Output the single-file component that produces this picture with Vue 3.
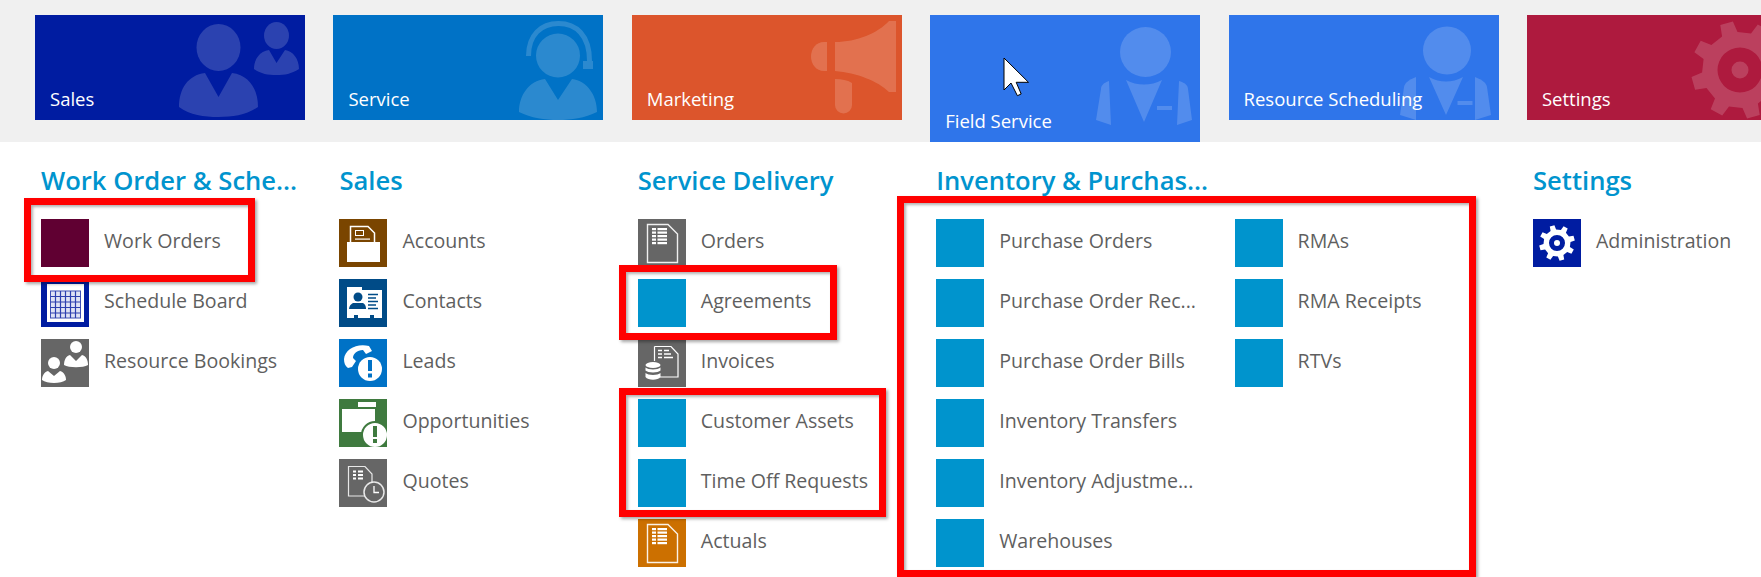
<script setup>
function gear(cx, cy, R, r, n, rot) {
  const pts = []
  const step = (Math.PI * 2) / n
  for (let i = 0; i < n; i++) {
    const a = rot + i * step
    const w = step * 0.17
    const w2 = step * 0.27
    pts.push([cx + r * Math.cos(a - w2), cy + r * Math.sin(a - w2)])
    pts.push([cx + R * Math.cos(a - w), cy + R * Math.sin(a - w)])
    pts.push([cx + R * Math.cos(a + w), cy + R * Math.sin(a + w)])
    pts.push([cx + r * Math.cos(a + w2), cy + r * Math.sin(a + w2)])
  }
  return 'M' + pts.map(p => p[0].toFixed(1) + ' ' + p[1].toFixed(1)).join('L') + 'Z'
}
function ring(cx, cy, r) {
  return `M${cx - r} ${cy}a${r} ${r} 0 1 0 ${2 * r} 0a${r} ${r} 0 1 0 ${-2 * r} 0Z`
}
const tileGear = gear(213, 55, 49, 38, 8, -1.85) + ring(213, 55, 22.5) + ring(213, 55, 8.5)
const smallGear = gear(24, 24, 18, 13.5, 8, -1.85) + ring(24, 24, 8)

const tiles = [
  { key: 'sales', label: 'Sales' },
  { key: 'service', label: 'Service' },
  { key: 'marketing', label: 'Marketing' },
  { key: 'field', label: 'Field Service' },
  { key: 'resource', label: 'Resource Scheduling' },
  { key: 'settings', label: 'Settings' },
]

const blue = null
const columns = [
  {
    title: 'Work Order & Sche...',
    items: [
      { label: 'Work Orders', icon: 'maroon' },
      { label: 'Schedule Board', icon: 'board' },
      { label: 'Resource Bookings', icon: 'bookings' },
    ],
  },
  {
    title: 'Sales',
    items: [
      { label: 'Accounts', icon: 'accounts' },
      { label: 'Contacts', icon: 'contacts' },
      { label: 'Leads', icon: 'leads' },
      { label: 'Opportunities', icon: 'opportunities' },
      { label: 'Quotes', icon: 'quotes' },
    ],
  },
  {
    title: 'Service Delivery',
    items: [
      { label: 'Orders', icon: 'orders' },
      { label: 'Agreements', icon: blue },
      { label: 'Invoices', icon: 'invoices' },
      { label: 'Customer Assets', icon: blue },
      { label: 'Time Off Requests', icon: blue },
      { label: 'Actuals', icon: 'actuals' },
    ],
  },
  {
    title: 'Inventory & Purchas...',
    wide: true,
    items: [
      { label: 'Purchase Orders', icon: blue },
      { label: 'Purchase Order Rec...', icon: blue },
      { label: 'Purchase Order Bills', icon: blue },
      { label: 'Inventory Transfers', icon: blue },
      { label: 'Inventory Adjustme...', icon: blue },
      { label: 'Warehouses', icon: blue },
      { label: 'RMAs', icon: blue },
      { label: 'RMA Receipts', icon: blue },
      { label: 'RTVs', icon: blue },
    ],
  },
  {
    title: 'Settings',
    items: [{ label: 'Administration', icon: 'admin' }],
  },
]
const boxes = ['box-work', 'box-agree', 'box-assets', 'box-inventory']
const docRows = [0, 1, 2, 3, 4]
</script>

<template>
  <div class="page">
    <header class="topbar">
      <div v-for="t in tiles" :key="t.key" class="tile" :class="'tile-' + t.key">
        <svg class="tile-art" width="270" :height="t.key === 'field' ? 127 : 105" fill="#fff" fill-opacity=".17">
          <g v-if="t.key === 'sales'">
            <ellipse cx="183.5" cy="32.5" rx="22" ry="23.5" />
            <path d="M170 58L183.5 82L197 58C214 60 223 74 223 92C212 100 198 102 183.5 102C169 102 155 100 144 92C144 74 153 60 170 58Z" />
            <ellipse cx="241.5" cy="20.5" rx="12.5" ry="13.5" />
            <path d="M234 35L241.5 48L250 35C258 36 264 44 264 54C256 59 250 60 241.5 60C233 60 226 59 219 54C219 44 225 36 234 35Z" />
          </g>
          <g v-else-if="t.key === 'service'">
            <ellipse cx="225" cy="40.5" rx="22" ry="22" />
            <path d="M212 64L225 85L239 64C254 66 264 80 264 97C252 103 238 105 225 105C212 105 198 103 186 97C186 80 196 66 212 64Z" />
            <path d="M195.500 41C195.500 20 208 8.500 225.500 8.500C243 8.500 256.500 20 256.500 46" fill="none" stroke="#fff" stroke-opacity=".17" stroke-width="5" />
            <rect x="250" y="46" width="10" height="8" />
          </g>
          <g v-else-if="t.key === 'marketing'">
            <path d="M203 27C225 27 246 18 257 6H264V77H257C246 66 225 58 203 56Z" />
            <path d="M195 27H192C184 27 179 34 179 41.500C179 49 184 56 192 56H195Z" />
            <path d="M203 64C210 64 215 65 220 68V90A8.500 8.500 0 0 1 203 90Z" />
          </g>
          <g v-else-if="t.key === 'field'">
            <ellipse cx="215.500" cy="37" rx="25.500" ry="25" />
            <path d="M196 65C207 71 221 71 232 65L214 107Z" />
            <rect x="227" y="91" width="15" height="4" />
            <path d="M179 66C173 68 171 71 171 74L166 105L181 110Z" />
            <path d="M249 66C256 68 258 71 258 74L262 105L247 110Z" />
          </g>
          <g v-else-if="t.key === 'resource'">
            <circle cx="218" cy="35.500" r="24" />
            <path d="M200 62C211 68 223 68 234 62L217 100Z" />
            <rect x="228.500" y="86" width="15" height="4" />
            <path d="M187 62C179 65 176 68 175 72L171 100L187 105Z" />
            <path d="M246 62C254 65 257 68 258 72L262 100L246 105Z" />
          </g>
          <path v-else-if="t.key === 'settings'" :d="tileGear" fill-rule="evenodd" />
        </svg>
        <span class="tile-label">{{ t.label }}</span>
      </div>
    </header>

    <main class="menu">
      <section v-for="c in columns" :key="c.title" class="col" :class="{ 'col-wide': c.wide }">
        <h2 class="col-title">{{ c.title }}</h2>
        <ul class="items">
          <li v-for="i in c.items" :key="i.label" class="item">
            <span class="icon" :class="i.icon ? 'ic-' + i.icon : 'ic-blue'">
              <svg v-if="i.icon && i.icon !== 'maroon'" width="48" height="48" viewBox="0 0 48 48">
                <g v-if="i.icon === 'board'">
                  <rect x="6" y="5" width="37" height="38" fill="#fff" />
                  <rect x="9.500" y="12" width="30" height="27" fill="#dfe3f4" stroke="#3f50b5" />
                  <path d="M9.500 17.500H39.500M9.500 23H39.500M9.500 28.500H39.500M9.500 34H39.500M14.500 12V39M19.500 12V39M24.500 12V39M29.500 12V39M34.500 12V39" stroke="#2c3fae" stroke-width="1.200" fill="none" />
                </g>
                <g v-else-if="i.icon === 'bookings'" fill="#fff">
                  <circle cx="35" cy="8" r="6" />
                  <path d="M29 16L35 22L41 16C45 17 47 21 47 26C42 29 28 29 23 26C23 21 25 17 29 16Z" />
                  <circle cx="13" cy="24" r="6" />
                  <path d="M7 32L13 37L19 32C23 33 25 37 25 41C20 45 6 45 1 41C1 37 3 33 7 32Z" />
                </g>
                <g v-else-if="i.icon === 'accounts'">
                  <path d="M11.500 23V7.500H29L35.500 14V23" fill="none" stroke="#fff" stroke-width="1.500" />
                  <rect x="16.500" y="11.500" width="8" height="5" fill="none" stroke="#fff" />
                  <rect x="16" y="19.500" width="15" height="1.200" fill="#fff" />
                  <rect x="8" y="23" width="33" height="20" fill="#fff" />
                </g>
                <g v-else-if="i.icon === 'contacts'">
                  <path d="M8 8H23V11H43V39H35V36H31V39H19V36H15V39H8Z" fill="#fff" />
                  <circle cx="19" cy="18" r="4.500" fill="#004b87" />
                  <path d="M14 24H24C26 25 27 27 27 30H10C10 27 12 25 14 24Z" fill="#004b87" />
                  <path d="M29 15.500H39M29 19H37M29 22.500H39M29 26H37M29 29.500H39" stroke="#004b87" stroke-width="1.500" />
                </g>
                <g v-else-if="i.icon === 'leads'">
                  <path d="M5 20C6 10 18 4 30 7L33 12L27 15L24 11C18 11 14 15 14 19L17 22L13 28L9 29C6 27 5 24 5 20Z" fill="#fff" />
                  <circle cx="31" cy="30" r="12" fill="#fff" />
                  <rect x="29" y="21" width="4" height="11" fill="#0072c6" />
                  <rect x="29" y="34.500" width="4" height="4" fill="#0072c6" />
                </g>
                <g v-else-if="i.icon === 'opportunities'">
                  <rect x="19" y="3" width="18" height="5" fill="#fff" />
                  <rect x="3" y="10" width="33" height="23" fill="#fff" />
                  <circle cx="36" cy="36" r="13" fill="#fff" stroke="#3f7a3f" stroke-width="2" />
                  <rect x="34" y="27" width="4" height="11" fill="#3f7a3f" />
                  <rect x="34" y="40" width="4" height="4" fill="#3f7a3f" />
                </g>
                <g v-else-if="i.icon === 'quotes'">
                  <path d="M9.500 7.500H26L33 15V37H9.500Z" fill="none" stroke="#fff" stroke-width="1.200" stroke-opacity=".85" />
                  <path d="M14 12.500H17M19 12.500H24M14 16H17M19 16H24M14 19.500H17M19 19.500H24" stroke="#fff" stroke-width="2" />
                  <circle cx="35" cy="33" r="10" fill="#666" stroke="#fff" stroke-opacity=".85" stroke-width="1.500" />
                  <path d="M35 27V33.500H40" fill="none" stroke="#fff" stroke-width="1.300" />
                </g>
                <g v-else-if="i.icon === 'orders' || i.icon === 'actuals'">
                  <path d="M9.500 5.500H30L39.500 15V43.500H9.500Z" fill="none" stroke="#fff" stroke-width="1.400" stroke-opacity=".9" />
                  <g v-for="r in docRows" :key="r">
                    <rect x="14" :y="9 + r * 3.500" width="4" height="2.200" fill="#fff" />
                    <rect x="19.500" :y="9 + r * 3.500" width="9.500" height="2.200" fill="#fff" />
                  </g>
                </g>
                <g v-else-if="i.icon === 'invoices'">
                  <path d="M16.500 7.500H33L40 15V38H22" fill="none" stroke="#fff" stroke-width="1.200" />
                  <path d="M16.500 7.500V22" fill="none" stroke="#fff" stroke-width="1.200" />
                  <path d="M20 11.500H24M26 11.500H31M20 15H24M26 15H33M20 18.500H24M26 18.500H35" stroke="#fff" stroke-width="1.600" />
                  <g fill="#fff">
                    <ellipse cx="15" cy="26" rx="7.500" ry="3" />
                    <path d="M7.500 28.500C10 31 20 31 22.500 28.500V31.500C20 34 10 34 7.500 31.500Z" />
                    <path d="M7.500 34C10 36.500 20 36.500 22.500 34V38C20 41.500 10 41.500 7.500 38Z" />
                  </g>
                </g>
                <path v-else-if="i.icon === 'admin'" :d="smallGear" fill="#fff" fill-rule="evenodd" />
                <circle v-if="i.icon === 'admin'" cx="24" cy="24" r="3" fill="#fff" />
              </svg>
            </span>
            <span class="item-label">{{ i.label }}</span>
          </li>
        </ul>
      </section>
    </main>

    <div v-for="b in boxes" :key="b" class="redbox" :class="b"></div>

    <svg class="cursor" width="27" height="40" viewBox="0 0 27 40">
      <path d="M1 1V33L8 26L14.400 38.700L18.200 37L13.200 25.300H25.500Z" fill="#fff" stroke="#000" stroke-width="1" />
    </svg>
  </div>
</template>

<style scoped>
.page {
  position: relative;
  width: 1761px;
  height: 577px;
  overflow: hidden;
  background: #fff;
  font-family: "Open Sans", "Noto Sans", sans-serif;
}
.topbar {
  display: flex;
  gap: 28.4px;
  height: 142px;
  padding-left: 35px;
  background: #f0f0f0;
  overflow: hidden;
}
.tile {
  position: relative;
  flex: 0 0 270px;
  height: 105px;
  margin-top: 15px;
  overflow: hidden;
}
.tile-sales { background: #001ca1; }
.tile-service { background: #0072c6; }
.tile-marketing { background: #dc552c; }
.tile-field { background: #2f75ea; height: 127px; }
.tile-resource { background: #2f75ea; }
.tile-settings { background: #ae1a3e; }
.tile-art {
  position: absolute;
  left: 0;
  top: 0;
}
.tile-label {
  position: absolute;
  left: 15px;
  bottom: 9px;
  color: #fff;
  font-size: 18.5px;
  line-height: 24px;
  white-space: nowrap;
}
.menu {
  display: grid;
  grid-template-columns: repeat(6, 298.4px);
  padding: 19px 0 0 41px;
}
.col-wide {
  grid-column: span 2;
}
.col-title {
  margin: 0;
  height: 58px;
  color: #0094ce;
  font-size: 25.6px;
  font-weight: 600;
  line-height: 40px;
  white-space: nowrap;
}
.items {
  display: grid;
  grid-template-rows: repeat(6, 48px);
  grid-auto-flow: column;
  grid-auto-columns: 298.4px;
  row-gap: 12px;
  margin: 0;
  padding: 0;
  list-style: none;
}
.item {
  display: flex;
  align-items: center;
  gap: 15px;
}
.icon {
  flex: 0 0 48px;
  width: 48px;
  height: 48px;
}
.icon svg {
  display: block;
}
.ic-blue { background: #0094cd; }
.ic-maroon { background: #600032; }
.ic-board { background: #001ca1; }
.ic-bookings { background: #666; }
.ic-accounts { background: #7a4500; }
.ic-contacts { background: #004b87; }
.ic-leads { background: #0072c6; }
.ic-opportunities { background: #3f7a3f; }
.ic-quotes { background: #666; }
.ic-orders { background: #666; }
.ic-invoices { background: #666; }
.ic-actuals { background: #cc7000; }
.ic-admin { background: #001ca1; }
.item-label {
  margin-top: -6px;
  color: #5f5f5f;
  font-size: 19.6px;
  white-space: nowrap;
}
.redbox {
  position: absolute;
  box-sizing: border-box;
  border: 7px solid #f00;
  box-shadow: 2px 2px 3px rgba(0, 0, 0, .35), inset 2px 2px 3px rgba(0, 0, 0, .3);
  pointer-events: none;
}
.box-work { left: 24px; top: 198px; width: 231px; height: 84px; }
.box-agree { left: 619px; top: 265px; width: 218px; height: 75px; }
.box-assets { left: 619px; top: 388px; width: 267px; height: 129px; }
.box-inventory { left: 897px; top: 196px; width: 579px; height: 381px; }
.cursor {
  position: absolute;
  left: 1003px;
  top: 57px;
}
</style>

<style>
html, body {
  overflow: hidden;
}
</style>
